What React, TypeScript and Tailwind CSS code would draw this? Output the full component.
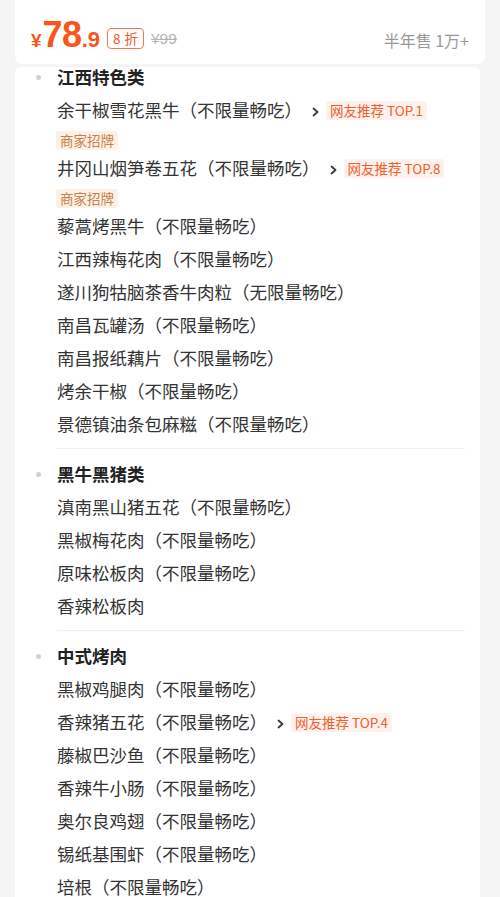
import React from "react"

type Item = { name: string; top?: string; sign?: boolean }
type Section = { title: string; items: Item[] }

const sections: Section[] = [
  {
    title: "江西特色类",
    items: [
      { name: "余干椒雪花黑牛（不限量畅吃）", top: "TOP.1", sign: true },
      { name: "井冈山烟笋卷五花（不限量畅吃）", top: "TOP.8", sign: true },
      { name: "藜蒿烤黑牛（不限量畅吃）" },
      { name: "江西辣梅花肉（不限量畅吃）" },
      { name: "遂川狗牯脑茶香牛肉粒（无限量畅吃）" },
      { name: "南昌瓦罐汤（不限量畅吃）" },
      { name: "南昌报纸藕片（不限量畅吃）" },
      { name: "烤余干椒（不限量畅吃）" },
      { name: "景德镇油条包麻糍（不限量畅吃）" },
    ],
  },
  {
    title: "黑牛黑猪类",
    items: [
      { name: "滇南黑山猪五花（不限量畅吃）" },
      { name: "黑椒梅花肉（不限量畅吃）" },
      { name: "原味松板肉（不限量畅吃）" },
      { name: "香辣松板肉" },
    ],
  },
  {
    title: "中式烤肉",
    items: [
      { name: "黑椒鸡腿肉（不限量畅吃）" },
      { name: "香辣猪五花（不限量畅吃）", top: "TOP.4" },
      { name: "藤椒巴沙鱼（不限量畅吃）" },
      { name: "香辣牛小肠（不限量畅吃）" },
      { name: "奥尔良鸡翅（不限量畅吃）" },
      { name: "锡纸基围虾（不限量畅吃）" },
      { name: "培根（不限量畅吃）" },
    ],
  },
]

const font = { fontFamily: '"Noto Sans CJK SC", "Noto Sans", sans-serif' }
const numFont = { fontFamily: '"Liberation Sans", "Noto Sans CJK SC", sans-serif' }

function Chevron() {
  return (
    <svg width="7" height="10" viewBox="0 0 7 10" className="ml-[10px] shrink-0 mt-[2px]">
      <path d="M1.5 1.5 L5.5 5 L1.5 8.5" fill="none" stroke="#3a3a3a" strokeWidth="1.8" strokeLinecap="round" strokeLinejoin="round" />
    </svg>
  )
}

function MenuItem({ item }: { item: Item }) {
  return (
    <div>
      <div className="flex items-center h-[33px] whitespace-nowrap">
        <span className="text-[17.5px] text-[#333] [text-spacing-trim:space-all]">{item.name}</span>
        {item.top && (
          <>
            <Chevron />
            <span className="ml-[7px] h-[19px] px-[4px] text-[13.5px] leading-[19px] bg-[#fff1ec] text-[#f0602f] rounded-[3px]">
              网友推荐 {item.top}
            </span>
          </>
        )}
      </div>
      {item.sign && (
        <div className="h-[25px] -ml-[1px]">
          <span className="inline-block -mt-[2px] h-[19px] px-[4px] text-[13.5px] leading-[19px] bg-[#fdf0e4] text-[#c98150] rounded-[3px]">
            商家招牌
          </span>
        </div>
      )}
    </div>
  )
}

export default function App() {
  return (
    <div className="min-h-screen bg-[#f5f5f5] px-[15px]" style={font}>
      <div className="bg-white rounded-b-[8px] h-[64px] pt-[17px] pl-[16px] pr-[16px] flex justify-between items-start">
        <div className="flex items-center">
          <span className="flex items-baseline text-[#fa541c] font-bold leading-none" style={numFont}>
            <span className="text-[19px]">¥</span>
            <span className="text-[36px] ml-[1px] tracking-[-0.5px]">78</span>
            <span className="text-[22px]">.9</span>
          </span>
          <span className="flex items-center mt-[7px] ml-[7px] h-[21px] px-[5px] border border-[#f37b4f] rounded-[4px] text-[13.5px] leading-[19px] text-[#f25a28]">
            <span>8</span>
            <span className="ml-[4px]">折</span>
          </span>
          <span className="mt-[7px] ml-[7px] text-[15.5px] leading-[20px] text-[#b3b3b3] line-through" style={numFont}>
            ¥99
          </span>
        </div>
        <span className="mt-[13px] text-[16px] leading-[20px] text-[#999]">半年售 1万+</span>
      </div>

      <div className="mt-[3px] mr-[5px] bg-white rounded-t-[6px] pl-[42px] pr-[15px] pb-[20px]">
        {sections.map((s, i) => (
          <div key={s.title} className={i > 0 ? "mt-[7px] border-t border-[#f0f0f0] pt-[15px]" : ""}>
            <div className="flex items-center h-[20px] mb-[7px] -ml-[21px]">
              <span className="w-[5px] h-[5px] rounded-full bg-[#d2d2d2] mr-[16px]" />
              <span className="text-[17.5px] font-bold text-[#222]">{s.title}</span>
            </div>
            {s.items.map((it) => (
              <MenuItem key={it.name} item={it} />
            ))}
          </div>
        ))}
      </div>
    </div>
  )
}
